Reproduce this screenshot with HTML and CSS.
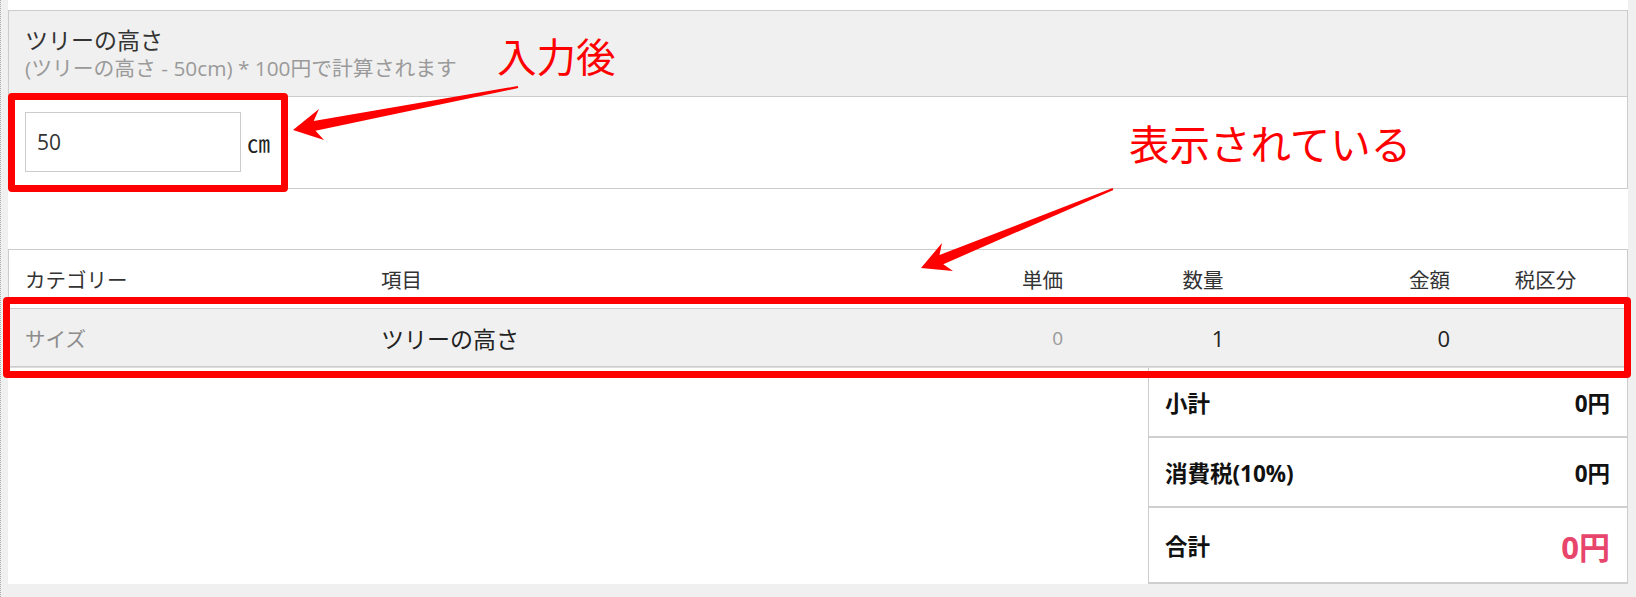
FILE: index.html
```html
<!DOCTYPE html>
<html lang="ja">
<head>
<meta charset="utf-8">
<title>ツリーの高さ</title>
<link rel="stylesheet" href="styles.css">
</head>
<body>
<div class="frame">
  <main class="panel">
    <section class="option">
      <header class="option-head">
        <div class="option-title">ツリーの高さ</div>
        <div class="option-note">(ツリーの高さ - 50cm) * 100円で計算されます</div>
      </header>
      <div class="option-body">
        <input class="num-input" type="text" value="50">
        <span class="unit">㎝</span>
      </div>
    </section>

    <section class="items">
      <div class="row head">
        <div class="c-cat">カテゴリー</div>
        <div class="c-item">項目</div>
        <div class="c-price">単価</div>
        <div class="c-qty">数量</div>
        <div class="c-amount">金額</div>
        <div class="c-tax">税区分</div>
      </div>
      <div class="row data">
        <div class="c-cat cat-val">サイズ</div>
        <div class="c-item item-val">ツリーの高さ</div>
        <div class="c-price price-val">0</div>
        <div class="c-qty qty-val">1</div>
        <div class="c-amount amount-val">0</div>
        <div class="c-tax"></div>
      </div>
    </section>

    <section class="totals">
      <div class="t-row"><span class="t-label">小計</span><span class="t-value">0円</span></div>
      <div class="t-row"><span class="t-label">消費税(10%)</span><span class="t-value">0円</span></div>
      <div class="t-row t-grand"><span class="t-label">合計</span><span class="t-value t-pink">0円</span></div>
    </section>
  </main>

  <div class="mark mark-input"></div>
  <div class="mark mark-row"></div>
  <svg class="arrows" width="1636" height="597" viewBox="0 0 1636 597" aria-hidden="true">
    <polygon points="293,130 319,109 313.7,121 517.8,86 518.2,88 315.5,130.8 324,140" fill="#ff0000"/>
    <polygon points="921,268 942,243 939.5,255 1112.6,188.1 1113.4,189.9 943.3,264.2 953,271" fill="#ff0000"/>
  </svg>
  <div class="note note-after">入力後</div>
  <div class="note note-shown">表示されている</div>
</div>
</body>
</html>
```

FILE: styles.css
```css
* { box-sizing: border-box; }

html, body {
  margin: 0;
  padding: 0;
}

body {
  background: #f0f0f0;
  font-family: "Open Sans", "Noto Sans CJK JP", sans-serif;
  color: #333;
}

.frame {
  position: relative;
  width: 1636px;
  height: 597px;
  padding: 0 8px;
  overflow: hidden;
}

.frame::before {
  content: "";
  position: absolute;
  left: 0;
  top: 0;
  bottom: 0;
  border-left: 1px dotted #a8a8a8;
}

.panel {
  background: #fff;
  padding-top: 10px;
}

/* option box */
.option {
  border: 1px solid #cccccc;
}

.option-head {
  height: 86px;
  background: #f0f0f0;
  border-bottom: 1px solid #cccccc;
  padding: 14px 16px 0;
}

.option-title {
  font-size: 23px;
  line-height: 30px;
  color: #333;
}

.option-note {
  font-size: 20.8px;
  line-height: 26px;
  color: #9a9a9a;
}

.option-body {
  height: 91px;
  padding: 15px 16px 16px;
  display: flex;
  align-items: center;
}

.num-input {
  width: 216px;
  height: 60px;
  border: 1px solid #cccccc;
  padding: 0 11px;
  font-family: "Open Sans", sans-serif;
  font-size: 21px;
  color: #333;
  background: #fff;
  outline: none;
}

.unit {
  margin-left: 6px;
  font-size: 23px;
  color: #222;
}

/* items table */
.items {
  margin-top: 60px;
  border: 1px solid #cccccc;
  border-bottom: 1px solid #dddddd;
}

.row {
  display: grid;
  grid-template-columns: 356px 522px 160px 280px 107px 177px;
  padding-left: 16px;
  align-items: center;
}

.head {
  height: 58px;
  font-size: 20.5px;
  color: #333;
}

.data {
  height: 59px;
  background: #f0f0f0;
  border-top: 1px solid #cccccc;
  border-bottom: 1px solid #cccccc;
}

.c-price, .c-amount { text-align: right; }
.c-qty { text-align: center; }
.c-tax { text-align: center; padding-left: 14px; }

.cat-val {
  font-size: 20.5px;
  color: #8c8c8c;
}

.item-val {
  font-size: 23px;
  color: #222;
}

.price-val {
  font-size: 19px;
  color: #999;
}

.qty-val {
  font-size: 22px;
  color: #222;
  padding-left: 30px;
}

.amount-val {
  font-size: 22px;
  color: #222;
}

/* totals */
.totals {
  width: 480px;
  margin-left: auto;
  border-left: 1px solid #cccccc;
  border-right: 1px solid #cccccc;
}

.t-row {
  height: 70px;
  display: flex;
  justify-content: space-between;
  align-items: center;
  padding: 0 17px 0 16px;
  border-bottom: 2px solid #cfcfcf;
}

.t-grand { height: 76px; }

.t-label, .t-value {
  font-size: 22.5px;
  font-weight: 700;
  color: #111;
}

.t-pink {
  font-size: 31px;
  color: #e8456c;
}

/* annotations over the screenshot */
.mark {
  position: absolute;
  border: 7px solid #ff0000;
  border-radius: 4px;
}

.mark-input {
  left: 8px;
  top: 93px;
  width: 280px;
  height: 99px;
}

.mark-row {
  left: 3px;
  top: 297px;
  width: 1628px;
  height: 81px;
}

.arrows {
  position: absolute;
  left: 0;
  top: 0;
}

.note {
  position: absolute;
  color: #ff0000;
  font-family: "Noto Sans CJK JP", sans-serif;
  font-weight: 400;
  white-space: nowrap;
}

.note-after {
  left: 497px;
  top: 35px;
  font-size: 39.5px;
  line-height: 40px;
}

.note-shown {
  left: 1129px;
  top: 122px;
  font-size: 40.5px;
  line-height: 41px;
}
```
